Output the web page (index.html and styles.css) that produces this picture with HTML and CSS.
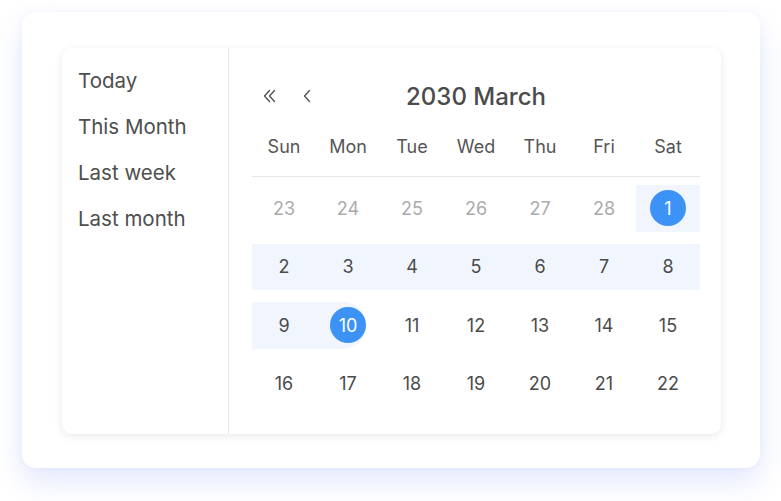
FILE: index.html
```html
<!DOCTYPE html>
<html lang="en">
<head>
    <meta charset="UTF-8">
    <meta name="viewport" content="width=device-width, initial-scale=1.0">
    <title>Range Picker</title>
    <link rel="stylesheet" href="styles.css">
</head>
<body>
    <div class="stage">
        <div class="frame">
            <div class="picker">
                <ul class="presets">
                    <li>Today</li>
                    <li>This Month</li>
                    <li>Last week</li>
                    <li>Last month</li>
                </ul>

                <div class="calendar">
                    <div class="cal-header">
                        <div class="nav">
                            <button class="nav-btn" aria-label="Previous year">
                                <svg width="16" height="16" viewBox="0 0 16 16" fill="none" stroke="#555" stroke-width="1.4" stroke-linecap="round" stroke-linejoin="round">
                                    <path d="M7.5 2.5 L2.5 8 L7.5 13.5"/>
                                    <path d="M12.5 2.5 L7.5 8 L12.5 13.5"/>
                                </svg>
                            </button>
                            <button class="nav-btn" aria-label="Previous month">
                                <svg width="16" height="16" viewBox="0 0 16 16" fill="none" stroke="#555" stroke-width="1.4" stroke-linecap="round" stroke-linejoin="round">
                                    <path d="M10.5 2.5 L5.5 8 L10.5 13.5"/>
                                </svg>
                            </button>
                        </div>
                        <div class="title">2030 March</div>
                        <div></div>
                    </div>

                    <div class="weekdays">
                        <span>Sun</span><span>Mon</span><span>Tue</span><span>Wed</span><span>Thu</span><span>Fri</span><span>Sat</span>
                    </div>

                    <div class="days">
                        <div class="day muted"><span>23</span></div>
                        <div class="day muted"><span>24</span></div>
                        <div class="day muted"><span>25</span></div>
                        <div class="day muted"><span>26</span></div>
                        <div class="day muted"><span>27</span></div>
                        <div class="day muted"><span>28</span></div>
                        <div class="day range range-start"><span class="picked">1</span></div>

                        <div class="day range"><span>2</span></div>
                        <div class="day range"><span>3</span></div>
                        <div class="day range"><span>4</span></div>
                        <div class="day range"><span>5</span></div>
                        <div class="day range"><span>6</span></div>
                        <div class="day range"><span>7</span></div>
                        <div class="day range"><span>8</span></div>

                        <div class="day range"><span>9</span></div>
                        <div class="day range range-end"><span class="picked">10</span></div>
                        <div class="day"><span>11</span></div>
                        <div class="day"><span>12</span></div>
                        <div class="day"><span>13</span></div>
                        <div class="day"><span>14</span></div>
                        <div class="day"><span>15</span></div>

                        <div class="day"><span>16</span></div>
                        <div class="day"><span>17</span></div>
                        <div class="day"><span>18</span></div>
                        <div class="day"><span>19</span></div>
                        <div class="day"><span>20</span></div>
                        <div class="day"><span>21</span></div>
                        <div class="day"><span>22</span></div>
                    </div>
                </div>
            </div>
        </div>
    </div>
</body>
</html>
```

FILE: styles.css
```css
* {
    box-sizing: border-box;
}

body {
    margin: 0;
    min-height: 501px;
    background: #ffffff;
    font-family: Inter, "Noto Sans", sans-serif;
    color: #4b4b4b;
}

.stage {
    padding: 12px 21px 0 22px;
}

.frame {
    width: 738px;
    height: 456px;
    padding: 36px 39px 34px 40px;
    background: #ffffff;
    border-radius: 14px;
    box-shadow: 0 14px 28px rgba(80, 110, 245, 0.16), 0 0 6px rgba(96, 128, 250, 0.07);
}

.picker {
    display: flex;
    height: 100%;
    background: #ffffff;
    border-radius: 10px;
    box-shadow: 0 2px 10px rgba(0, 0, 0, 0.09);
}

.presets {
    width: 167px;
    margin: 0;
    padding: 19px 0 0 16px;
    list-style: none;
    border-right: 1px solid #e6e6e6;
}

.presets li {
    height: 46px;
    line-height: 28px;
    font-size: 20.5px;
    color: #4e4e4e;
}

.calendar {
    flex: 1;
    padding: 24px 21px 0 23px;
}

.cal-header {
    display: grid;
    grid-template-columns: 1fr auto 1fr;
    align-items: center;
    height: 48px;
}

.nav {
    display: flex;
    gap: 13px;
    padding-left: 6px;
}

.nav-btn {
    width: 24px;
    height: 24px;
    padding: 0;
    border: none;
    background: none;
    display: flex;
    align-items: center;
    justify-content: center;
    cursor: pointer;
}

.title {
    font-size: 24px;
    font-weight: 500;
    color: #4b4b4b;
}

.weekdays {
    display: grid;
    grid-template-columns: repeat(7, 64px);
    height: 57px;
    padding-bottom: 4px;
    border-bottom: 1px solid #e6e6e6;
}

.weekdays span {
    text-align: center;
    line-height: 54px;
    font-size: 18px;
    color: #555555;
}

.days {
    display: grid;
    grid-template-columns: repeat(7, 64px);
    grid-auto-rows: 58.5px;
    padding-top: 2px;
}

.day {
    position: relative;
    display: flex;
    align-items: center;
    justify-content: center;
    font-size: 18px;
    color: #4b4b4b;
}

.day.muted {
    color: #ababab;
}

.day.range::before {
    content: "";
    position: absolute;
    left: 0;
    right: 0;
    top: 6px;
    bottom: 6px;
    background: #f1f5fd;
}

.day.range-end::before {
    right: 14px;
    border-radius: 0 23px 23px 0;
}

.day span {
    position: relative;
    display: flex;
    align-items: center;
    justify-content: center;
    width: 36px;
    height: 36px;
}

.day .picked {
    border-radius: 50%;
    background: #3c93f5;
    color: #ffffff;
}
```
